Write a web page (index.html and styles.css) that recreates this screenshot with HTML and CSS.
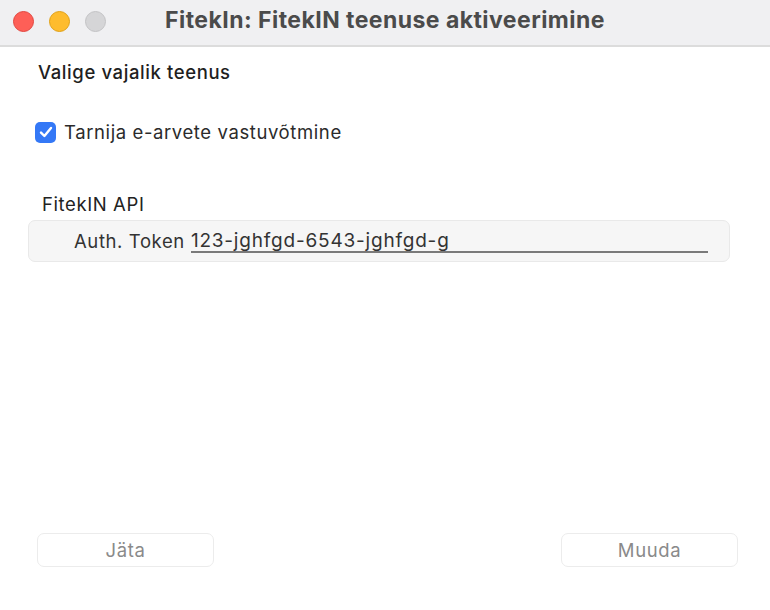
FILE: index.html
```html
<!DOCTYPE html>
<html lang="et">
<head>
<meta charset="utf-8">
<title>FitekIn: FitekIN teenuse aktiveerimine</title>
<link rel="stylesheet" href="styles.css">
</head>
<body>
<div class="window">
  <div class="titlebar">
    <div class="lights">
      <span class="light red"></span>
      <span class="light yellow"></span>
      <span class="light gray"></span>
    </div>
    <div class="title">FitekIn: FitekIN teenuse aktiveerimine</div>
    <div></div>
  </div>
  <div class="content">
    <div class="heading">Valige vajalik teenus</div>
    <label class="check">
      <span class="box">
        <svg width="16" height="16" viewBox="0 0 16 16"><path d="M3 8.6 L6.4 12 L13 4" fill="none" stroke="#fff" stroke-width="2.4" stroke-linecap="round" stroke-linejoin="round"/></svg>
      </span>
      <span class="check-label">Tarnija e-arvete vastuvõtmine</span>
    </label>
    <div class="group-title">FitekIN API</div>
    <div class="group">
      <span class="field-label">Auth. Token</span>
      <span class="field">123-jghfgd-6543-jghfgd-g</span>
    </div>
    <div class="footer">
      <div class="btn">Jäta</div>
      <div class="btn">Muuda</div>
    </div>
  </div>
</div>
</body>
</html>
```
FILE: styles.css
```css
html, body {
  margin: 0;
  padding: 0;
  background: #ffffff;
}
body {
  font-family: Inter, "Noto Sans", "Liberation Sans", sans-serif;
  color: #262626;
  font-size: 18.5px;
  letter-spacing: 0.6px;
}
.window {
  width: 770px;
  height: 610px;
  display: flex;
  flex-direction: column;
}
.titlebar {
  height: 45px;
  flex: none;
  background: #f0f0f2;
  border-bottom: 2px solid #dcdcdc;
  display: grid;
  grid-template-columns: 1fr auto 1fr;
  align-items: center;
}
.lights {
  display: flex;
  gap: 15px;
  padding-left: 13px;
  padding-bottom: 3px;
}
.light {
  width: 21px;
  height: 21px;
  border-radius: 50%;
  box-sizing: border-box;
}
.red { background: #fe5f57; border: 1px solid #e2463f; }
.yellow { background: #febc2e; border: 1px solid #e1a116; }
.gray { background: #d5d5d7; border: 1px solid #c3c3c5; }
.title {
  font-size: 23px;
  font-weight: 700;
  color: #4b4b4b;
  letter-spacing: 0.45px;
  padding-bottom: 5px;
}
.content {
  flex: 1;
  display: flex;
  flex-direction: column;
  padding: 14px 28px 0 28px;
}
.heading {
  font-weight: 500;
  color: #1f1f1f;
  padding-left: 10px;
  line-height: 22px;
}
.check {
  display: flex;
  align-items: center;
  gap: 8px;
  margin-top: 38px;
  padding-left: 7px;
}
.box {
  width: 21px;
  height: 21px;
  border-radius: 5px;
  background: #3478f6;
  display: flex;
  align-items: center;
  justify-content: center;
}
.check-label {
  color: #2b2b2b;
}
.group-title {
  margin-top: 50px;
  padding-left: 14px;
  color: #222;
  line-height: 22px;
}
.group {
  margin-top: 5px;
  height: 42px;
  box-sizing: border-box;
  width: 702px;
  background: #f6f6f6;
  border: 1px solid #e9e9e9;
  border-radius: 7px;
  display: flex;
  align-items: center;
  padding-left: 45px;
  gap: 6px;
}
.field-label {
  color: #333;
}
.field {
  width: 517px;
  font-size: 19px;
  letter-spacing: 0.8px;
  color: #333;
  border-bottom: 2px solid #7a7a7a;
  line-height: 21px;
}
.footer {
  margin-top: auto;
  margin-bottom: 43px;
  display: flex;
  justify-content: space-between;
  padding: 0 4px 0 9px;
}
.btn {
  width: 177px;
  height: 34px;
  box-sizing: border-box;
  border: 1px solid #ececec;
  border-radius: 7px;
  background: #fff;
  display: flex;
  align-items: center;
  justify-content: center;
  color: #8a8a8a;
}
```
